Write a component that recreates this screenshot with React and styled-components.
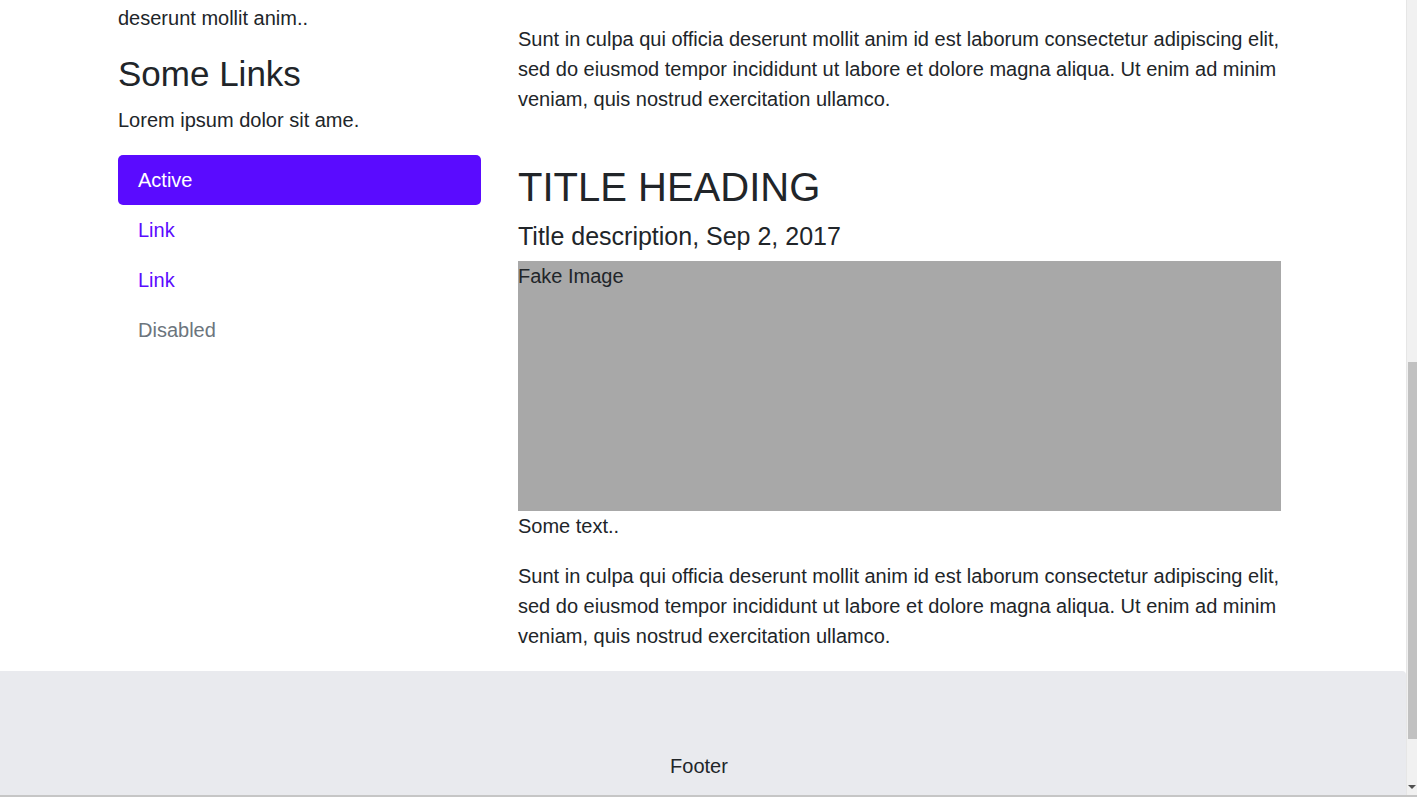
import React from "react";
import styled, { createGlobalStyle } from "styled-components";

const GlobalStyle = createGlobalStyle`
  html, body {
    margin: 0;
    padding: 0;
    height: 797px;
    overflow: hidden;
    background: #fff;
  }
  body {
    font-family: "Liberation Sans", Arial, sans-serif;
    font-size: 20px;
    line-height: 1.5;
    color: #212529;
  }
  * {
    box-sizing: border-box;
  }
`;

const Window = styled.div`
  display: flex;
  height: 797px;
  border-bottom: 2px solid #c6c6c6;
`;

const Page = styled.div`
  flex: 1;
  display: flex;
  flex-direction: column;
  overflow: hidden;
`;

const Container = styled.div`
  display: grid;
  grid-template-columns: 363px 763px;
  column-gap: 37px;
  padding-left: 118px;
`;

const Column = styled.div`
  padding-top: ${(p) => p.top}px;
`;

const Text = styled.p`
  margin: 0 0 20px;
`;

const Heading3 = styled.h3`
  margin: 0 0 10px;
  font-size: 35px;
  font-weight: 500;
  line-height: 1.2;
`;

const Heading2 = styled.h2`
  margin: 49px 0 10px;
  font-size: 40px;
  font-weight: 500;
  line-height: 1.2;
`;

const Heading5 = styled.h5`
  margin: 0 0 10px;
  font-size: 25px;
  font-weight: 500;
  line-height: 1.2;
`;

const NavList = styled.ul`
  list-style: none;
  margin: 0;
  padding: 0;
  display: flex;
  flex-direction: column;
`;

const NavPill = styled.li`
  padding: 10px 20px;
  border-radius: 5px;
  background: ${(p) => (p.active ? "#5a0bff" : "transparent")};
  color: ${(p) => (p.active ? "#fff" : p.disabled ? "#6c757d" : "#5a0bff")};
  cursor: ${(p) => (p.disabled ? "default" : "pointer")};
`;

const FakeImage = styled.div`
  height: 250px;
  background: #a8a8a8;
`;

const Footer = styled.footer`
  flex: 1;
  background: #e9eaee;
  border-top-right-radius: 4px;
  text-align: center;
  padding-top: 80px;
  padding-right: 8px;
`;

const ScrollTrack = styled.div`
  width: 11px;
  background: #f1f1f1;
  border-left: 1px solid #e6e6e6;
  display: flex;
  flex-direction: column;
  padding-top: 362px;
`;

const ScrollThumb = styled.div`
  height: 377px;
  margin-left: 1px;
  background: #c1c1c1;
`;

const ScrollArrow = styled.div`
  margin-top: auto;
  margin-bottom: 6px;
  margin-left: 1px;
  width: 0;
  height: 0;
  border-left: 4px solid transparent;
  border-right: 4px solid transparent;
  border-top: 4px solid #505050;
`;

const lorem =
  "Sunt in culpa qui officia deserunt mollit anim id est laborum consectetur adipiscing elit, sed do eiusmod tempor incididunt ut labore et dolore magna aliqua. Ut enim ad minim veniam, quis nostrud exercitation ullamco.";

const App = () => {
  return (
    <Window>
      <GlobalStyle />
      <Page>
        <Container>
          <Column top={3}>
            <Text>deserunt mollit anim..</Text>
            <Heading3>Some Links</Heading3>
            <Text>Lorem ipsum dolor sit ame.</Text>
            <NavList>
              <NavPill active>Active</NavPill>
              <NavPill>Link</NavPill>
              <NavPill>Link</NavPill>
              <NavPill disabled>Disabled</NavPill>
            </NavList>
          </Column>

          <Column top={24}>
            <Text>{lorem}</Text>
            <Heading2>TITLE HEADING</Heading2>
            <Heading5>Title description, Sep 2, 2017</Heading5>
            <FakeImage>Fake Image</FakeImage>
            <Text>Some text..</Text>
            <Text>{lorem}</Text>
          </Column>
        </Container>

        <Footer>Footer</Footer>
      </Page>

      <ScrollTrack>
        <ScrollThumb />
        <ScrollArrow />
      </ScrollTrack>
    </Window>
  );
};

export default App;
